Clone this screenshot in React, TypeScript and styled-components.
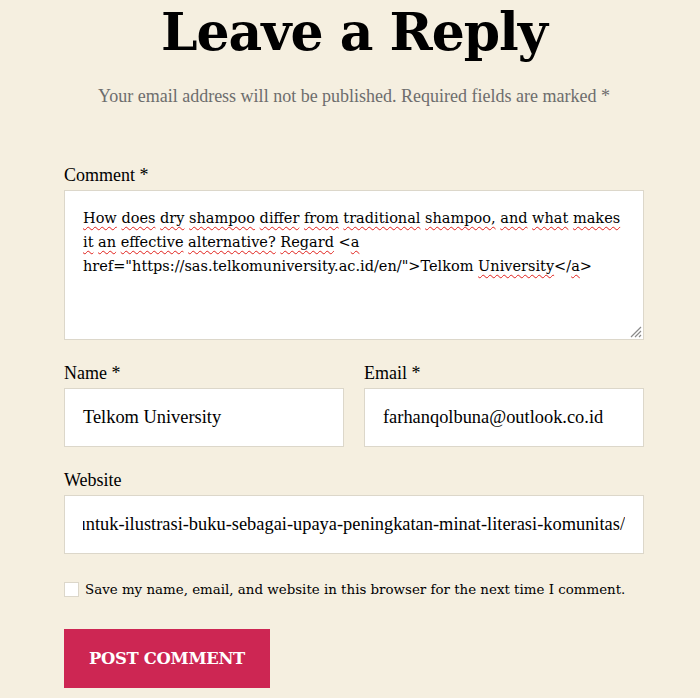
import React from "react";
import styled, { createGlobalStyle } from "styled-components";

const GlobalStyle = createGlobalStyle`
  html, body {
    margin: 0;
    padding: 0;
    background: #f5efe0;
  }
  body {
    font-family: "Liberation Serif", "Times New Roman", serif;
    color: #000;
  }
`;

const Page = styled.div`
  width: 700px;
  height: 698px;
  box-sizing: border-box;
  padding-left: 8px;
  overflow: hidden;
  display: flex;
  flex-direction: column;
  align-items: center;
`;

const Title = styled.h2`
  margin: 0;
  font-family: "DejaVu Serif", Georgia, serif;
  font-weight: 700;
  font-size: 52px;
  line-height: 63px;
  letter-spacing: -1px;
  color: #000;
`;

const Notes = styled.p`
  margin: 21px 0 0;
  font-size: 18px;
  line-height: 24px;
  color: #6d6d6d;
`;

const Form = styled.form`
  width: 580px;
  margin-top: 55px;
  display: flex;
  flex-direction: column;
`;

const Field = styled.div`
  display: flex;
  flex-direction: column;
  margin-bottom: 21px;
`;

const Row = styled.div`
  display: grid;
  grid-template-columns: 1fr 1fr;
  column-gap: 20px;
`;

const Label = styled.label`
  font-size: 18px;
  line-height: 24px;
  color: #000;
  margin-bottom: 3px;
`;

const CommentBox = styled.div`
  position: relative;
  height: 150px;
  box-sizing: border-box;
  background: #fff;
  border: 1px solid #dcd7ca;
  padding: 15px 18px;
  font-family: "DejaVu Serif", Georgia, serif;
  font-size: 14.5px;
  line-height: 24px;
  color: #000;
`;

const Misspelled = styled.span`
  text-decoration: underline wavy #e0201b;
  text-decoration-thickness: 1px;
  text-underline-offset: 3px;
`;

const Grip = styled.svg`
  position: absolute;
  right: 1px;
  bottom: 1px;
`;

const Input = styled.div`
  height: 59px;
  box-sizing: border-box;
  background: #fff;
  border: 1px solid #dcd7ca;
  padding: 0 18px;
  display: flex;
  align-items: center;
  font-size: 18.4px;
  color: #000;
  white-space: nowrap;
`;

const Clip = styled.div`
  flex: 1;
  display: flex;
  justify-content: flex-end;
  overflow: hidden;
`;

const CheckRow = styled.div`
  display: flex;
  align-items: center;
  gap: 6px;
  height: 28px;
`;

const Box = styled.span`
  width: 13px;
  height: 13px;
  background: #fff;
  border: 1px solid #dcd7ca;
`;

const CheckText = styled.span`
  font-family: "DejaVu Serif", Georgia, serif;
  font-size: 13.4px;
  color: #000;
`;

const Submit = styled.button`
  align-self: flex-start;
  margin-top: 26px;
  width: 206px;
  height: 59px;
  border: none;
  background: #cd2653;
  color: #fff;
  font-family: "DejaVu Serif", Georgia, serif;
  font-weight: 700;
  font-size: 16.4px;
  letter-spacing: -0.3px;
  text-transform: uppercase;
  cursor: pointer;
`;

const words = (text: string) =>
  text.split(" ").map((w, i, arr) => (
    <React.Fragment key={i}>
      <Misspelled>{w}</Misspelled>
      {i < arr.length - 1 ? " " : ""}
    </React.Fragment>
  ));

function App() {
  return (
    <Page>
      <GlobalStyle />
      <Title>Leave a Reply</Title>
      <Notes>
        Your email address will not be published. Required fields are marked *
      </Notes>
      <Form onSubmit={(e) => e.preventDefault()}>
        <Field>
          <Label>Comment *</Label>
          <CommentBox>
            {words(
              "How does dry shampoo differ from traditional shampoo, and what makes"
            )}{" "}
            {words("it an effective alternative?")} <Misspelled>Regard</Misspelled>{" "}
            &lt;<Misspelled>a</Misspelled>{" "}
            href="https://sas.telkomuniversity.ac.id/en/"&gt;Telkom{" "}
            <Misspelled>University</Misspelled>&lt;/<Misspelled>a</Misspelled>&gt;
            <Grip width="14" height="14" viewBox="0 0 14 14">
              <path
                d="M13 3 L3 13 M13 7 L7 13 M13 11 L11 13"
                stroke="#8a8a8a"
                strokeWidth="1.2"
              />
            </Grip>
          </CommentBox>
        </Field>
        <Row>
          <Field>
            <Label>Name *</Label>
            <Input>Telkom University</Input>
          </Field>
          <Field>
            <Label>Email *</Label>
            <Input>farhanqolbuna@outlook.co.id</Input>
          </Field>
        </Row>
        <Field>
          <Label>Website</Label>
          <Input>
            <Clip>
              <span>
                https://sas.telkomuniversity.ac.id/en/ilustrasi-untuk-ilustrasi-buku-sebagai-upaya-peningkatan-minat-literasi-komunitas/
              </span>
            </Clip>
          </Input>
        </Field>
        <CheckRow>
          <Box />
          <CheckText>
            Save my name, email, and website in this browser for the next time I
            comment.
          </CheckText>
        </CheckRow>
        <Submit type="submit">Post Comment</Submit>
      </Form>
    </Page>
  );
}

export default App;
